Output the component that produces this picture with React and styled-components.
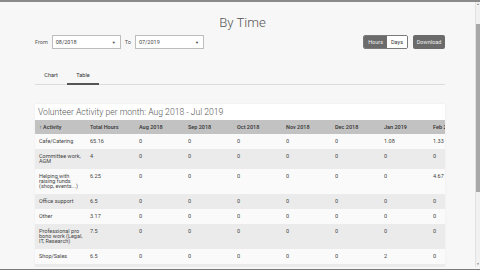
import React, { useState } from "react";
import styled, { createGlobalStyle } from "styled-components";

const GlobalStyle = createGlobalStyle`
  html, body {
    margin: 0;
    padding: 0;
    overflow: hidden;
    background: #f7f7f7;
    font-family: Roboto, "Liberation Sans", Arial, sans-serif;
  }
`;

const Frame = styled.div`
  height: 270px;
  box-sizing: border-box;
  border-top: 2px solid #8a8a8a;
  border-bottom: 1px solid #7a7a7a;
  padding-bottom: 2px;
  background: #f7f7f7;
  display: flex;
`;

const Viewport = styled.div`
  flex: 1;
  min-width: 0;
  overflow: hidden;
`;

const Rail = styled.div`
  width: 5px;
  box-sizing: border-box;
  background: #f1f1f1;
  border-left: 1px solid #e2e2e2;
  display: flex;
  flex-direction: column;
  align-items: center;
`;

const RailArrow = styled.div`
  height: ${(p) => p.$h}px;
  display: flex;
  align-items: ${(p) => (p.$down ? "flex-end" : "flex-start")};
  padding: 1px 0;
  font-size: 3px;
  line-height: 3px;
  color: #777;
`;

const Thumb = styled.div`
  width: 4px;
  height: 168px;
  background: #a8a8a8;
`;

const RailSpace = styled.div`
  flex: 1;
`;

const Page = styled.div`
  padding: 12px 30px 40px 35px;
`;

const Title = styled.h1`
  margin: 0;
  text-align: center;
  font-size: 13.2px;
  font-weight: 300;
  color: #555;
  line-height: 16px;
  padding: 1px 0 0 5px;
`;

const Toolbar = styled.div`
  display: flex;
  align-items: center;
  justify-content: space-between;
  margin-top: 4px;
`;

const Filters = styled.div`
  display: flex;
  align-items: center;
  gap: 4px;
`;

const Label = styled.span`
  font-size: 5.5px;
  color: #555;
`;

const Select = styled.div`
  width: 69px;
  height: 14px;
  box-sizing: border-box;
  border: 1px solid #bdbdbd;
  background: #fff;
  display: flex;
  align-items: center;
  justify-content: space-between;
  padding: 0 4px 0 3px;
  font-size: 5.5px;
  color: #444;
`;

const Caret = styled.span`
  font-size: 4px;
  color: #444;
`;

const Actions = styled.div`
  display: flex;
  align-items: center;
  gap: 5px;
`;

const Toggle = styled.div`
  display: flex;
  height: 14px;
  border: 1px solid #7a7a7a;
  border-radius: 2px;
  box-sizing: border-box;
  overflow: hidden;
`;

const ToggleOption = styled.button`
  border: none;
  padding: 0 4px;
  font-family: inherit;
  font-size: 5.5px;
  background: ${(p) => (p.$active ? "#6b6b6b" : "#fff")};
  color: ${(p) => (p.$active ? "#eee" : "#333")};
  min-width: ${(p) => (p.$active ? "20px" : "17px")};
`;

const Button = styled.button`
  height: 14px;
  width: 32px;
  border: none;
  border-radius: 2px;
  background: #6b6b6b;
  color: #eee;
  font-family: inherit;
  font-size: 5.5px;
  padding: 0;
`;

const Tabs = styled.div`
  display: flex;
  margin-top: 20px;
  border-bottom: 1px solid #dcdcdc;
`;

const Tab = styled.div`
  width: 32px;
  text-align: center;
  font-size: 5.5px;
  color: #333;
  padding: 3px 0 5px;
  border-bottom: 2px solid ${(p) => (p.$active ? "#555" : "transparent")};
  margin-bottom: -1px;
`;

const Card = styled.div`
  margin-top: 19px;
  background: #fff;
  overflow: hidden;
  box-shadow: 0 0 2px rgba(0, 0, 0, 0.06);
`;

const CardTitle = styled.div`
  height: 16px;
  display: flex;
  align-items: center;
  padding-left: 3px;
  font-size: 8.6px;
  font-weight: 300;
  color: #555;
`;

const Table = styled.table`
  border-collapse: collapse;
  table-layout: fixed;
  width: 443px;
`;

const Th = styled.th`
  width: ${(p) => p.$w}px;
  background: #c2c2c2;
  text-align: left;
  font-size: 5.5px;
  font-weight: 500;
  color: #333;
  height: 14px;
  padding: 0 4px;
  box-sizing: border-box;
  white-space: nowrap;
  overflow: hidden;
`;

const Row = styled.tr`
  background: ${(p) => (p.$odd ? "#ebebeb" : "#fafafa")};
`;

const Td = styled.td`
  vertical-align: top;
  font-size: 5.5px;
  line-height: 5px;
  color: #444;
  padding: 5px 2px 5px 4px;
  box-sizing: border-box;
`;

const columns = [
  "\u2191 Activity",
  "Total Hours",
  "Aug 2018",
  "Sep 2018",
  "Oct 2018",
  "Nov 2018",
  "Dec 2018",
  "Jan 2019",
  "Feb 2019",
];

const rows = [
  ["Cafe/Catering", "65.16", "0", "0", "0", "0", "0", "1.08", "1.33"],
  ["Committee work, AGM", "4", "0", "0", "0", "0", "0", "0", "0"],
  ["Helping with raising funds (shop, events...)", "6.25", "0", "0", "0", "0", "0", "0", "4.67"],
  ["Office support", "6.5", "0", "0", "0", "0", "0", "0", "0"],
  ["Other", "3.17", "0", "0", "0", "0", "0", "0", "0"],
  ["Professional pro bono work (Legal, IT, Research)", "7.5", "0", "0", "0", "0", "0", "0", "0"],
  ["Shop/Sales", "6.5", "0", "0", "0", "0", "0", "2", "0"],
  ["Support and Care", "3.08", "0", "0", "0", "0", "0", "0", "1.08"],
  ["Teaching/Training", "12.5", "0", "0", "0", "0", "0", "0", "2.5"],
  ["Visiting", "9", "0", "0", "0", "0", "0", "1", "0"],
];

export default function App() {
  const [unit, setUnit] = useState("Hours");
  const [tab, setTab] = useState("Table");

  return (
    <>
      <GlobalStyle />
      <Frame>
        <Viewport>
          <Page>
            <Title>By Time</Title>
            <Toolbar>
              <Filters>
                <Label>From</Label>
                <Select>
                  <span>08/2018</span>
                  <Caret>▼</Caret>
                </Select>
                <Label>To</Label>
                <Select>
                  <span>07/2019</span>
                  <Caret>▼</Caret>
                </Select>
              </Filters>
              <Actions>
                <Toggle>
                  {["Hours", "Days"].map((u) => (
                    <ToggleOption key={u} $active={unit === u} onClick={() => setUnit(u)}>
                      {u}
                    </ToggleOption>
                  ))}
                </Toggle>
                <Button>Download</Button>
              </Actions>
            </Toolbar>
            <Tabs>
              {["Chart", "Table"].map((t) => (
                <Tab key={t} $active={tab === t} onClick={() => setTab(t)}>
                  {t}
                </Tab>
              ))}
            </Tabs>
            <Card>
              <CardTitle>Volunteer Activity per month: Aug 2018 - Jul 2019</CardTitle>
              <Table>
                <thead>
                  <tr>
                    {columns.map((c, i) => (
                      <Th key={c} $w={i === 0 ? 51 : 49}>
                        {c}
                      </Th>
                    ))}
                  </tr>
                </thead>
                <tbody>
                  {rows.map((r, i) => (
                    <Row key={r[0]} $odd={i % 2 === 1}>
                      {r.map((v, j) => (
                        <Td key={j}>{v}</Td>
                      ))}
                    </Row>
                  ))}
                </tbody>
              </Table>
            </Card>
          </Page>
        </Viewport>
        <Rail>
          <RailArrow $h={20}>▲</RailArrow>
          <Thumb />
          <RailSpace />
          <RailArrow $h={8} $down>▼</RailArrow>
        </Rail>
      </Frame>
    </>
  );
}
